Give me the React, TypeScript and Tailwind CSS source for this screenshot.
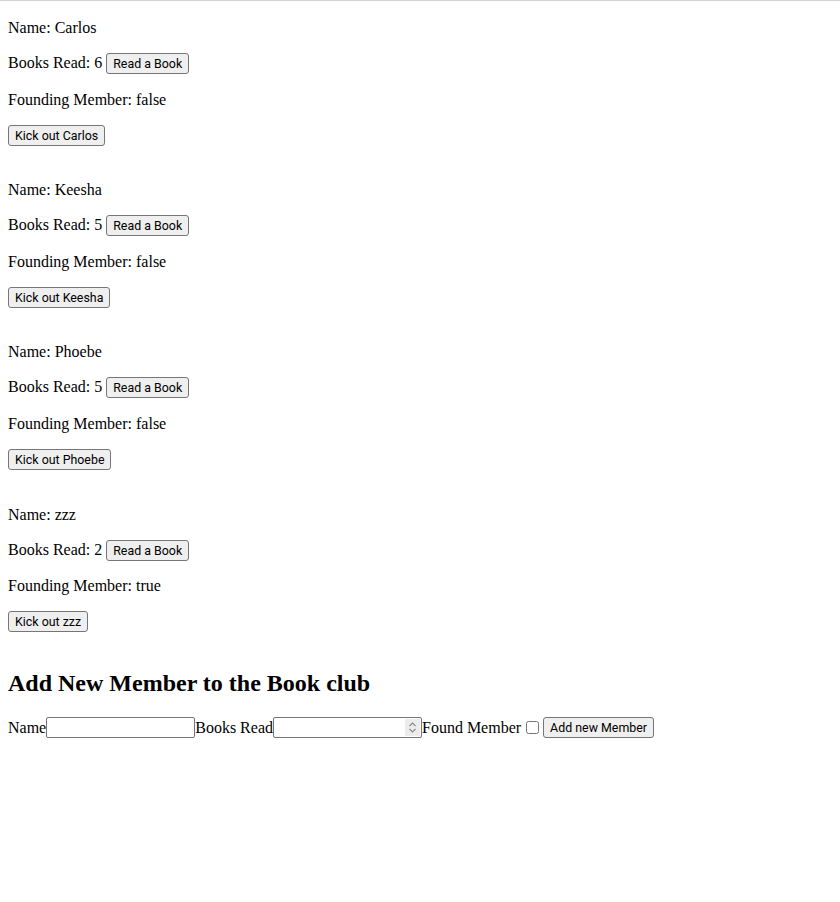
import React, { useState } from "react";

type Member = { name: string; books: number; founding: boolean };

const btn =
  "inline-block align-baseline bg-[#efefef] border border-[#767676] rounded-[3px] px-[6px] py-[1px] text-[12.4px] leading-[17px] text-black font-['Roboto','Liberation_Sans',Arial,sans-serif] hover:bg-[#e5e5e5]";

const inputCls =
  "w-[149px] h-[21px] border border-[#767676] rounded-[2px] px-[2px] text-[13px] font-['Roboto','Liberation_Sans',Arial,sans-serif] bg-white outline-none";

export default function App() {
  const [members, setMembers] = useState<Member[]>([
    { name: "Carlos", books: 6, founding: false },
    { name: "Keesha", books: 5, founding: false },
    { name: "Phoebe", books: 5, founding: false },
    { name: "zzz", books: 2, founding: true },
  ]);
  const [name, setName] = useState("");
  const [books, setBooks] = useState("");
  const [founding, setFounding] = useState(false);

  return (
    <div className="min-h-[902px] bg-white border-t border-[#d3d3d3] font-['Liberation_Serif','Times_New_Roman',serif] text-[16px] leading-[normal] text-black">
      <div className="flex flex-col px-2 pt-[18px]">
        {members.map((m, i) => (
          <div key={m.name + i} className="flex flex-col gap-4 mb-[35px]">
            <p>Name: {m.name}</p>
            <p className="h-[21.6px]">
              Books Read: {m.books}{" "}
              <button
                className={btn}
                onClick={() =>
                  setMembers(members.map((x, j) => (j === i ? { ...x, books: x.books + 1 } : x)))
                }
              >
                Read a Book
              </button>
            </p>
            <p>Founding Member: {String(m.founding)}</p>
            <p className="h-[21.6px]">
              <button className={btn} onClick={() => setMembers(members.filter((_, j) => j !== i))}>
                Kick out {m.name}
              </button>
            </p>
          </div>
        ))}
        <h2 className="mt-[2px] text-[24px] font-bold leading-[normal] mb-[20px]">Add New Member to the Book club</h2>
        <div className="flex items-center h-[21.6px]">
          <span>Name</span>
          <input value={name} onChange={(e) => setName(e.target.value)} className={inputCls} />
          <span>Books Read</span>
          <span className="relative inline-flex">
            <input
              type="number"
              value={books}
              onChange={(e) => setBooks(e.target.value)}
              className={inputCls + " [appearance:textfield] [&::-webkit-inner-spin-button]:appearance-none"}
            />
            <span className="absolute right-[2px] top-[2px] w-[15px] h-[17px] bg-[#ececec] flex items-center justify-center pointer-events-none">
              <svg width="9" height="13" viewBox="0 0 9 13" fill="none" stroke="#8a8a8a" strokeWidth="1.2">
                <path d="M1.5 5 L4.5 2 L7.5 5" />
                <path d="M1.5 8 L4.5 11 L7.5 8" />
              </svg>
            </span>
          </span>
          <span>Found Member</span>
          <input
            type="checkbox"
            checked={founding}
            onChange={(e) => setFounding(e.target.checked)}
            className="w-[13px] h-[13px] ml-[5px] mr-[4px] my-[3px]"
          />
          <button
            className={btn}
            onClick={() => {
              if (!name) return;
              setMembers([...members, { name, books: Number(books) || 0, founding }]);
              setName("");
              setBooks("");
              setFounding(false);
            }}
          >
            Add new Member
          </button>
        </div>
      </div>
    </div>
  );
}
